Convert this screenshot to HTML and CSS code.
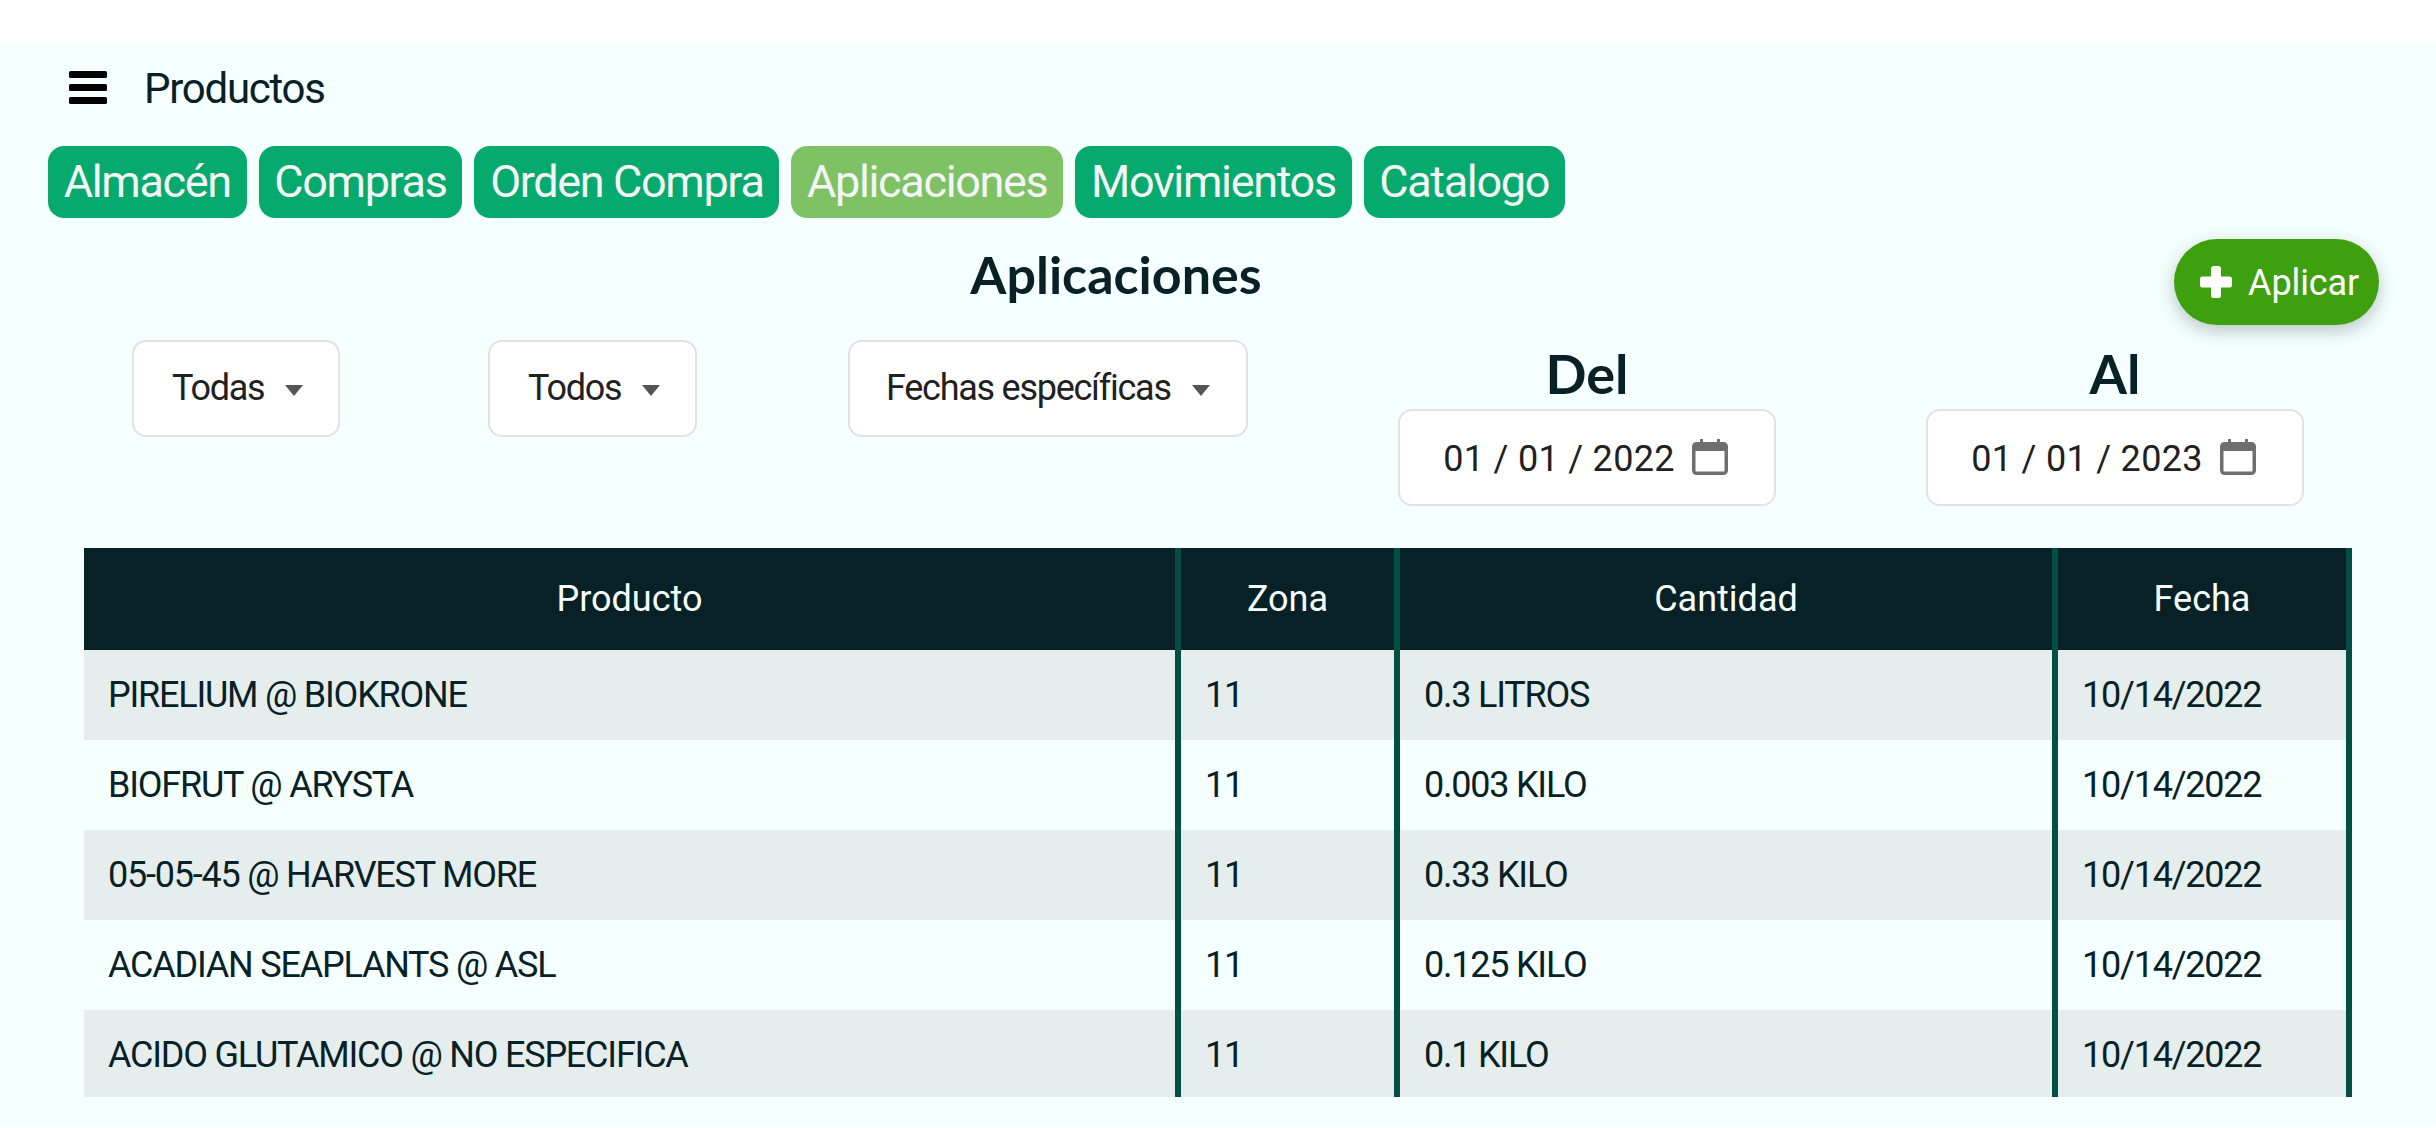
FILE: index.html
```html
<!DOCTYPE html>
<html lang="es">
<head>
    <meta charset="UTF-8">
    <title>Productos - Aplicaciones</title>
    <link rel="stylesheet" href="styles.css">
</head>
<body>
    <div class="page">
        <div class="topbar">
            <svg class="menu-icon" width="38" height="33" viewBox="0 0 38 33">
                <rect x="0" y="0" width="38" height="7" rx="1.5"/>
                <rect x="0" y="13" width="38" height="7" rx="1.5"/>
                <rect x="0" y="26" width="38" height="7" rx="1.5"/>
            </svg>
            <span class="topbar-title">Productos</span>
        </div>

        <div class="tabs">
            <a class="tab">Almacén</a>
            <a class="tab">Compras</a>
            <a class="tab">Orden Compra</a>
            <a class="tab active">Aplicaciones</a>
            <a class="tab">Movimientos</a>
            <a class="tab">Catalogo</a>
        </div>

        <h1 class="title">Aplicaciones</h1>

        <a class="fab">
            <svg width="32" height="32" viewBox="0 0 32 32">
                <rect x="11" y="0" width="10" height="32" rx="2.500"/>
                <rect x="0" y="10.500" width="32" height="11" rx="2.500"/>
            </svg>
            <span>Aplicar</span>
        </a>

        <div class="filters">
            <div class="select select-zona">Todas<i class="caret"></i></div>
            <div class="select select-prod">Todos<i class="caret"></i></div>
            <div class="select select-fecha">Fechas específicas<i class="caret"></i></div>
            <div class="date-field">
                <div class="date-label">Del</div>
                <div class="date-input">
                    <span>01 / 01 / 2022</span>
                    <svg width="36" height="36" viewBox="0 0 36 36">
                        <path d="M8 0h3v3h14V0h3v3h3.500C34 3 36 5 36 7.500V31.500C36 34 34 36 31.500 36h-27C2 36 0 34 0 31.500V7.500C0 5 2 3 4.500 3H8zM3.500 12v19.500c0 .6.400 1 1 1h27c.6 0 1-.4 1-1V12z"/>
                    </svg>
                </div>
            </div>
            <div class="date-field">
                <div class="date-label">Al</div>
                <div class="date-input">
                    <span>01 / 01 / 2023</span>
                    <svg width="36" height="36" viewBox="0 0 36 36">
                        <path d="M8 0h3v3h14V0h3v3h3.500C34 3 36 5 36 7.500V31.500C36 34 34 36 31.500 36h-27C2 36 0 34 0 31.500V7.500C0 5 2 3 4.500 3H8zM3.500 12v19.500c0 .6.400 1 1 1h27c.6 0 1-.4 1-1V12z"/>
                    </svg>
                </div>
            </div>
        </div>

        <div class="table-wrap">
            <table class="data">
                <colgroup>
                    <col class="col-producto">
                    <col class="col-zona">
                    <col class="col-cantidad">
                    <col class="col-fecha">
                </colgroup>
                <thead>
                    <tr>
                        <th>Producto</th>
                        <th>Zona</th>
                        <th>Cantidad</th>
                        <th>Fecha</th>
                    </tr>
                </thead>
                <tbody>
                    <tr>
                        <td>PIRELIUM @ BIOKRONE</td>
                        <td>11</td>
                        <td>0.3 LITROS</td>
                        <td>10/14/2022</td>
                    </tr>
                    <tr>
                        <td>BIOFRUT @ ARYSTA</td>
                        <td>11</td>
                        <td>0.003 KILO</td>
                        <td>10/14/2022</td>
                    </tr>
                    <tr>
                        <td>05-05-45 @ HARVEST MORE</td>
                        <td>11</td>
                        <td>0.33 KILO</td>
                        <td>10/14/2022</td>
                    </tr>
                    <tr>
                        <td>ACADIAN SEAPLANTS @ ASL</td>
                        <td>11</td>
                        <td>0.125 KILO</td>
                        <td>10/14/2022</td>
                    </tr>
                    <tr>
                        <td>ACIDO GLUTAMICO @ NO ESPECIFICA</td>
                        <td>11</td>
                        <td>0.1 KILO</td>
                        <td>10/14/2022</td>
                    </tr>
                </tbody>
            </table>
        </div>
    </div>
</body>
</html>
```

FILE: styles.css
```css
html, body {
    margin: 0;
    padding: 0;
    height: 100%;
    background-color: #ffffff;
    overflow: hidden;
}
body {
    padding-top: 42px;
    box-sizing: border-box;
    font-family: Roboto, "Noto Sans", sans-serif;
    color: #082126;
}
.page {
    position: relative;
    height: 1084px;
    background-color: #f5fffe;
    overflow: hidden;
}
.topbar {
    display: flex;
    align-items: center;
    height: 60px;
    padding: 15px 0 0 69px;
}
.menu-icon {
    fill: #000000;
    margin-right: 37px;
}
.topbar-title {
    padding-top: 3px;
    font-size: 42px;
    letter-spacing: -0.03em;
}
.tabs {
    display: flex;
    gap: 12px;
    margin-top: 29px;
    padding-left: 48px;
}
.tab {
    display: block;
    height: 72px;
    line-height: 71px;
    padding: 0 15.750px;
    border-radius: 16px;
    background-color: #06aa6e;
    color: #f5f5f5;
    font-size: 45px;
    letter-spacing: -0.03em;
}
.tab.active {
    background-color: #7fc265;
}
.title {
    margin: 20px 0 0;
    height: 72px;
    line-height: 72px;
    padding-right: 204px;
    text-align: center;
    font-family: Lato, sans-serif;
    font-size: 52px;
    font-weight: 700;
}
.fab {
    position: absolute;
    top: 197px;
    left: 2174px;
    display: flex;
    align-items: center;
    gap: 16px;
    width: 205px;
    height: 86px;
    padding-left: 26px;
    box-sizing: border-box;
    border-radius: 43px;
    background-color: #3fa00f;
    color: #ffffff;
    font-size: 36px;
    letter-spacing: -0.1px;
    box-shadow: 0 6px 18px rgba(8, 33, 38, 0.25);
}
.fab span {
    padding-top: 2px;
}
.fab svg {
    fill: #ffffff;
}
.filters {
    display: flex;
    align-items: flex-start;
    margin-top: 30px;
    padding-left: 132px;
}
.select,
.date-input {
    display: flex;
    align-items: center;
    flex: none;
    height: 97px;
    box-sizing: border-box;
    border: 2px solid #e2e2e2;
    border-radius: 14px;
    background-color: #ffffff;
    color: #212121;
    font-size: 36px;
}
.select {
    padding: 0 0 2px 38px;
    letter-spacing: -0.035em;
}
.select-zona {
    width: 208px;
    margin-right: 148px;
}
.select-prod {
    width: 209px;
    margin-right: 151px;
}
.select-fecha {
    width: 400px;
    margin-right: 150px;
    padding-left: 36px;
}
.caret {
    width: 0;
    height: 0;
    margin: 6px 0 0 21px;
    border-top: 11px solid #555555;
    border-left: 9.500px solid transparent;
    border-right: 9.500px solid transparent;
}
.date-field {
    flex: none;
    width: 378px;
    margin-right: 150px;
}
.date-label {
    height: 69px;
    line-height: 68px;
    text-align: center;
    font-family: Lato, sans-serif;
    font-size: 54px;
    font-weight: 700;
}
.date-input {
    justify-content: center;
    gap: 17px;
    padding-right: 3px;
    letter-spacing: 0.3px;
}
.date-input span {
    padding-top: 2px;
}
.date-input svg {
    fill: #6f6f6f;
    margin-bottom: 2px;
}
.table-wrap {
    margin: 42px 0 0 84px;
    width: 2268px;
    height: 549px;
    overflow: hidden;
}
.data {
    width: 2268px;
    table-layout: fixed;
    border-collapse: separate;
    border-spacing: 0;
    font-size: 36px;
    letter-spacing: -0.034em;
}
.col-producto { width: 1097px; }
.col-zona { width: 219px; }
.col-cantidad { width: 658px; }
.col-fecha { width: 294px; }
.data th,
.data td {
    border-right: 6px solid #034f42;
    box-sizing: border-box;
    padding: 0 0 0 24px;
    text-align: left;
    font-weight: 400;
}
.data th {
    height: 102px;
    padding: 0;
    background-color: #082126;
    color: #f5fffe;
    text-align: center;
    letter-spacing: 0;
}
.data td {
    height: 90px;
}
.data tbody tr:nth-child(odd) td {
    background-color: #e5eeec;
}
```
